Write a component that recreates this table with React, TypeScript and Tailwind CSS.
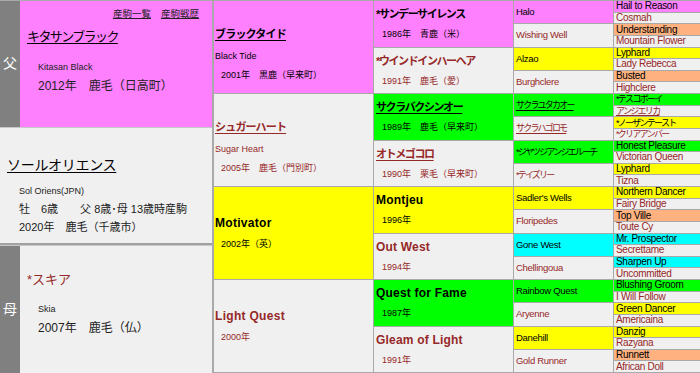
type Horse = { name: string; sub?: string; info?: string; bg: string; mare?: boolean; link?: boolean };

const FONT = "font-['Liberation_Sans','Noto_Sans_CJK_JP',sans-serif]";

const gen2: Horse[] = [
  { name: 'ブラックタイド', sub: 'Black Tide', info: '2001年　黒鹿（早来町）', bg: 'bg-[#ff80ff]', link: true },
  { name: 'シュガーハート', sub: 'Sugar Heart', info: '2005年　鹿毛（門別町）', bg: 'bg-[#f0f0f0]', mare: true, link: true },
  { name: 'Motivator', info: '2002年（英）', bg: 'bg-[#ffff00]' },
  { name: 'Light Quest', info: '2000年', bg: 'bg-[#f0f0f0]', mare: true },
];

const gen3: Horse[] = [
  { name: '*サンデーサイレンス', info: '1986年　青鹿（米）', bg: 'bg-[#ff80ff]' },
  { name: '*ウインドインハーヘア', info: '1991年　鹿毛（愛）', bg: 'bg-[#f0f0f0]', mare: true },
  { name: 'サクラバクシンオー', info: '1989年　鹿毛（早来町）', bg: 'bg-[#00ff00]', link: true },
  { name: 'オトメゴコロ', info: '1990年　栗毛（早来町）', bg: 'bg-[#f0f0f0]', mare: true, link: true },
  { name: 'Montjeu', info: '1996年', bg: 'bg-[#ffff00]' },
  { name: 'Out West', info: '1994年', bg: 'bg-[#f0f0f0]', mare: true },
  { name: 'Quest for Fame', info: '1987年', bg: 'bg-[#00ff00]' },
  { name: 'Gleam of Light', info: '1991年', bg: 'bg-[#f0f0f0]', mare: true },
];

const gen4: Horse[] = [
  { name: 'Halo', bg: 'bg-[#ff80ff]' },
  { name: 'Wishing Well', bg: 'bg-[#f0f0f0]', mare: true },
  { name: 'Alzao', bg: 'bg-[#ffff00]' },
  { name: 'Burghclere', bg: 'bg-[#f0f0f0]', mare: true },
  { name: 'サクラユタカオー', bg: 'bg-[#00ff00]', link: true },
  { name: 'サクラハゴロモ', bg: 'bg-[#f0f0f0]', mare: true, link: true },
  { name: '*ジヤツジアンジエルーチ', bg: 'bg-[#00ff00]' },
  { name: '*テイズリー', bg: 'bg-[#f0f0f0]', mare: true },
  { name: "Sadler's Wells", bg: 'bg-[#ffff00]' },
  { name: 'Floripedes', bg: 'bg-[#f0f0f0]', mare: true },
  { name: 'Gone West', bg: 'bg-[#00ffff]' },
  { name: 'Chellingoua', bg: 'bg-[#f0f0f0]', mare: true },
  { name: 'Rainbow Quest', bg: 'bg-[#00ff00]' },
  { name: 'Aryenne', bg: 'bg-[#f0f0f0]', mare: true },
  { name: 'Danehill', bg: 'bg-[#ffff00]' },
  { name: 'Gold Runner', bg: 'bg-[#f0f0f0]', mare: true },
];

const gen5: Horse[] = [
  { name: 'Hail to Reason', bg: 'bg-[#ff80ff]' },
  { name: 'Cosmah', bg: 'bg-[#f0f0f0]', mare: true },
  { name: 'Understanding', bg: 'bg-[#ffb27f]' },
  { name: 'Mountain Flower', bg: 'bg-[#f0f0f0]', mare: true },
  { name: 'Lyphard', bg: 'bg-[#ffff00]' },
  { name: 'Lady Rebecca', bg: 'bg-[#f0f0f0]', mare: true },
  { name: 'Busted', bg: 'bg-[#ffb27f]' },
  { name: 'Highclere', bg: 'bg-[#f0f0f0]', mare: true },
  { name: '*テスコボーイ', bg: 'bg-[#00ff00]' },
  { name: 'アンジエリカ', bg: 'bg-[#f0f0f0]', mare: true, link: true },
  { name: '*ノーザンテースト', bg: 'bg-[#ffff00]' },
  { name: '*クリアアンバー', bg: 'bg-[#f0f0f0]', mare: true },
  { name: 'Honest Pleasure', bg: 'bg-[#00ff00]' },
  { name: 'Victorian Queen', bg: 'bg-[#f0f0f0]', mare: true },
  { name: 'Lyphard', bg: 'bg-[#ffff00]' },
  { name: 'Tizna', bg: 'bg-[#f0f0f0]', mare: true },
  { name: 'Northern Dancer', bg: 'bg-[#ffff00]' },
  { name: 'Fairy Bridge', bg: 'bg-[#f0f0f0]', mare: true },
  { name: 'Top Ville', bg: 'bg-[#ffb27f]' },
  { name: 'Toute Cy', bg: 'bg-[#f0f0f0]', mare: true },
  { name: 'Mr. Prospector', bg: 'bg-[#00ffff]' },
  { name: 'Secrettame', bg: 'bg-[#f0f0f0]', mare: true },
  { name: 'Sharpen Up', bg: 'bg-[#00ffff]' },
  { name: 'Uncommitted', bg: 'bg-[#f0f0f0]', mare: true },
  { name: 'Blushing Groom', bg: 'bg-[#00ff00]' },
  { name: 'I Will Follow', bg: 'bg-[#f0f0f0]', mare: true },
  { name: 'Green Dancer', bg: 'bg-[#ffff00]' },
  { name: 'Americaina', bg: 'bg-[#f0f0f0]', mare: true },
  { name: 'Danzig', bg: 'bg-[#ffff00]' },
  { name: 'Razyana', bg: 'bg-[#f0f0f0]', mare: true },
  { name: 'Runnett', bg: 'bg-[#ffb27f]' },
  { name: 'African Doll', bg: 'bg-[#f0f0f0]', mare: true },
];

const isJp = (s: string) => /[\u3040-\u30ff\u4e00-\u9fff]/.test(s);
const tone = (h: Horse) => (h.mare ? 'text-[#962828]' : 'text-black');
const link = (h: Horse) => (h.link ? 'underline underline-offset-2' : '');

const Gen2Cell = ({ h }: { h: Horse }) => (
  <div className={`${h.bg} ${tone(h)} flex flex-col justify-center pl-px ${h.sub ? 'pt-[13px]' : ''}`}>
    <div
      className={`leading-[14px] font-bold ${link(h)} ${isJp(h.name) ? 'text-[11px] tracking-[-0.8px]' : 'text-[12px] tracking-[0.3px]'}`}
    >
      {h.name}
    </div>
    {h.sub && <div className="text-[9px] leading-[10px] mt-[10px]">{h.sub}</div>}
    <div className="text-[9px] leading-[12px] mt-[8px] pl-[6px]">{h.info}</div>
  </div>
);

const Gen3Cell = ({ h }: { h: Horse }) => (
  <div className={`${h.bg} ${tone(h)} flex flex-col justify-center pl-[2px]`}>
    <div
      className={`leading-[14px] font-bold ${link(h)} ${isJp(h.name) ? 'text-[11px] tracking-[-1.4px]' : 'text-[12px] tracking-[0.2px]'}`}
    >
      {h.name}
    </div>
    <div className="text-[9px] leading-[12px] mt-[7px] pl-[6px]">{h.info}</div>
  </div>
);

const Gen4Cell = ({ h }: { h: Horse }) => (
  <div className={`${h.bg} ${tone(h)} flex items-center pl-[2px] overflow-hidden whitespace-nowrap`}>
    <span
      className={`leading-[12px] ${link(h)} ${isJp(h.name) ? 'text-[9px] tracking-[-1.8px]' : 'text-[9.5px] tracking-[-0.3px]'}`}
    >
      {h.name}
    </span>
  </div>
);

const Gen5Cell = ({ h }: { h: Horse }) => (
  <div className={`${h.bg} ${tone(h)} flex items-center pl-[2px] overflow-hidden whitespace-nowrap`}>
    <span
      className={`leading-[10px] ${isJp(h.name) ? 'text-[9px] tracking-[-1.7px]' : 'text-[10px] tracking-[-0.3px]'} ${h.link ? 'underline underline-offset-1' : ''}`}
    >
      {h.name}
    </span>
  </div>
);

export default function App() {
  return (
    <div className={`${FONT} w-[700px] h-[373px] flex gap-[2px] bg-[#a9a9a9] text-[#222]`}>
      <div className="w-[212px] h-[373px] flex flex-col pt-px">
        <div className="h-[126px] shrink-0 flex">
          <div className="w-[20px] bg-[#808080] text-white text-[14px] leading-[16px] flex flex-col items-center pt-[54px]">父</div>
          <div className="flex-1 bg-[#ff80ff] flex flex-col">
            <div className="flex justify-end gap-[10px] pr-[13px] pt-[7px] text-[9.5px] leading-[11px] underline">
              <span>産駒一覧</span>
              <span>産駒戦歴</span>
            </div>
            <div className="pl-[7px] mt-[10px] text-[13px] leading-[15px] tracking-[-1.6px] underline underline-offset-2 text-black">
              キタサンブラック
            </div>
            <div className="pl-[18px] mt-[18px] text-[9px] leading-[10px]">Kitasan Black</div>
            <div className="pl-[18px] mt-[7px] text-[12px] leading-[14px]">2012年　鹿毛（日高町）</div>
          </div>
        </div>
        <div className="h-[118px] shrink-0 bg-[#f0f0f0] border-t border-[#c8c8c8] border-b-[2px] border-b-[#a0a0a0] flex flex-col pl-[7px] pt-[29px]">
          <div className="text-[14px] leading-[16px] tracking-[-0.3px] underline underline-offset-2 text-black">ソールオリエンス</div>
          <div className="pl-[12px] mt-[13px] text-[9px] leading-[10px]">Sol Oriens(JPN)</div>
          <div className="pl-[12px] mt-[7px] text-[11px] leading-[13px] whitespace-pre">牡　6歳　　父 8歳･母 13歳時産駒</div>
          <div className="pl-[12px] mt-[5px] text-[11px] leading-[13px]">2020年　鹿毛（千歳市）</div>
        </div>
        <div className="h-[128px] shrink-0 flex border-t border-[#c8c8c8]">
          <div className="w-[20px] bg-[#808080] text-white text-[14px] leading-[16px] flex flex-col items-center pt-[55px]">母</div>
          <div className="flex-1 bg-[#f0f0f0] flex flex-col pt-[26px]">
            <div className="pl-[7px] text-[13px] leading-[15px] text-[#962828]">*スキア</div>
            <div className="pl-[18px] mt-[17px] text-[9px] leading-[10px]">Skia</div>
            <div className="pl-[18px] mt-[7px] text-[12px] leading-[14px]">2007年　鹿毛（仏）</div>
          </div>
        </div>
      </div>
      <div className="flex-1 flex gap-px py-px">
        <div className="w-[159px] grid grid-rows-4 gap-px">
          {gen2.map((h, i) => <Gen2Cell key={i} h={h} />)}
        </div>
        <div className="w-[139px] grid grid-rows-8 gap-px">
          {gen3.map((h, i) => <Gen3Cell key={i} h={h} />)}
        </div>
        <div className="w-[99px] grid grid-rows-[repeat(16,minmax(0,1fr))] gap-px">
          {gen4.map((h, i) => <Gen4Cell key={i} h={h} />)}
        </div>
        <div className="flex-1 grid grid-rows-[repeat(32,minmax(0,1fr))] gap-px">
          {gen5.map((h, i) => <Gen5Cell key={i} h={h} />)}
        </div>
      </div>
    </div>
  );
}
